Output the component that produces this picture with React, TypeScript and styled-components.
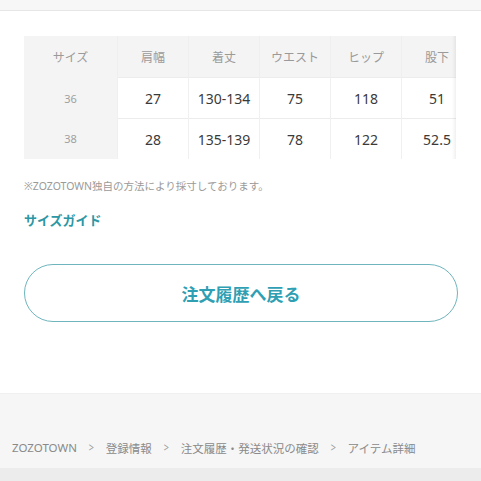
import { Fragment } from 'react';
import styled, { createGlobalStyle } from 'styled-components';

const GlobalStyle = createGlobalStyle`
  html, body {
    margin: 0;
    padding: 0;
    background: #fff;
    font-family: "Noto Sans", "Noto Sans CJK JP", sans-serif;
  }
`;

const Page = styled.div`
  width: 481px;
  height: 481px;
  overflow: hidden;
  display: flex;
  flex-direction: column;
`;

const TopBand = styled.div`
  height: 10px;
  background: #f7f7f7;
  border-bottom: 1px solid #e6e6e6;
  flex-shrink: 0;
`;

const Main = styled.div`
  padding: 25px 23px 0 24px;
  height: 357px;
  flex-shrink: 0;
`;

const TableWrap = styled.div`
  position: relative;
  width: 432px;
  overflow: hidden;
  &::after {
    content: '';
    position: absolute;
    top: 0;
    right: 0;
    width: 4px;
    height: 100%;
    background: linear-gradient(to right, rgba(0, 0, 0, 0), rgba(0, 0, 0, 0.06));
  }
`;

const Table = styled.table`
  border-collapse: collapse;
  table-layout: fixed;
  width: 443px;
`;

const HeadCell = styled.th<{ $first?: boolean }>`
  width: ${(p) => (p.$first ? '93px' : '70px')};
  height: 41px;
  padding: 0;
  background: #f4f4f4;
  color: #9a9a9a;
  font-size: 12px;
  font-weight: 400;
  text-align: center;
  border-left: ${(p) => (p.$first ? 'none' : '1px solid #efefef')};
`;

const SizeCell = styled.th`
  height: 40px;
  padding: 0;
  background: #f4f4f4;
  color: #a0a0a0;
  font-size: 11px;
  font-weight: 400;
  text-align: center;
`;

const Cell = styled.td`
  height: 40px;
  padding: 0;
  color: #3a3a3a;
  font-size: 14px;
  text-align: center;
  border-left: 1px solid #f0f0f0;
  border-top: 1px solid #ececec;
`;

const Note = styled.p`
  margin: 19px 0 0;
  font-size: 10.5px;
  color: #9a9a9a;
  line-height: 16px;
`;

const GuideLink = styled.a`
  display: block;
  margin-top: 17px;
  font-size: 13px;
  font-weight: 700;
  color: #2c97a5;
  text-decoration: none;
  line-height: 18px;
`;

const BackButton = styled.button`
  display: flex;
  align-items: center;
  justify-content: center;
  margin-top: 35px;
  width: 434px;
  height: 58px;
  border: 1px solid #6fb5bd;
  border-radius: 29px;
  background: #fff;
  color: #2f9fb3;
  font-family: "Noto Sans CJK JP", sans-serif;
  font-size: 17px;
  font-weight: 700;
  cursor: pointer;
`;

const Footer = styled.footer`
  flex: 1;
  display: flex;
  flex-direction: column;
  background: #f6f6f6;
  border-top: 1px solid #f0f0f0;
`;

const Crumbs = styled.nav`
  display: flex;
  align-items: center;
  gap: 11px;
  padding: 39px 0 0 12px;
  height: 29px;
  font-size: 11.5px;
  color: #8a8a8a;
  white-space: nowrap;
`;

const Sep = styled.span`
  font-size: 12px;
  color: #999;
  transform: scaleX(0.75);
`;

const BottomStrip = styled.div`
  margin-top: auto;
  height: 13px;
  background: #ececec;
`;

const heads = ['肩幅', '着丈', 'ウエスト', 'ヒップ', '股下'];
const rows = [
  { size: '36', values: ['27', '130-134', '75', '118', '51'] },
  { size: '38', values: ['28', '135-139', '78', '122', '52.5'] },
];
const crumbs = ['ZOZOTOWN', '登録情報', '注文履歴・発送状況の確認', 'アイテム詳細'];

export default function App() {
  return (
    <Page>
      <GlobalStyle />
      <TopBand />
      <Main>
        <TableWrap>
          <Table>
            <thead>
              <tr>
                <HeadCell $first>サイズ</HeadCell>
                {heads.map((h) => (
                  <HeadCell key={h}>{h}</HeadCell>
                ))}
              </tr>
            </thead>
            <tbody>
              {rows.map((r) => (
                <tr key={r.size}>
                  <SizeCell>{r.size}</SizeCell>
                  {r.values.map((v, i) => (
                    <Cell key={i}>{v}</Cell>
                  ))}
                </tr>
              ))}
            </tbody>
          </Table>
        </TableWrap>
        <Note>※ZOZOTOWN独自の方法により採寸しております。</Note>
        <GuideLink href="#">サイズガイド</GuideLink>
        <BackButton>注文履歴へ戻る</BackButton>
      </Main>
      <Footer>
        <Crumbs>
          {crumbs.map((c, i) => (
            <Fragment key={c}>
              {i > 0 && <Sep>&gt;</Sep>}
              <span>{c}</span>
            </Fragment>
          ))}
        </Crumbs>
        <BottomStrip />
      </Footer>
    </Page>
  );
}
